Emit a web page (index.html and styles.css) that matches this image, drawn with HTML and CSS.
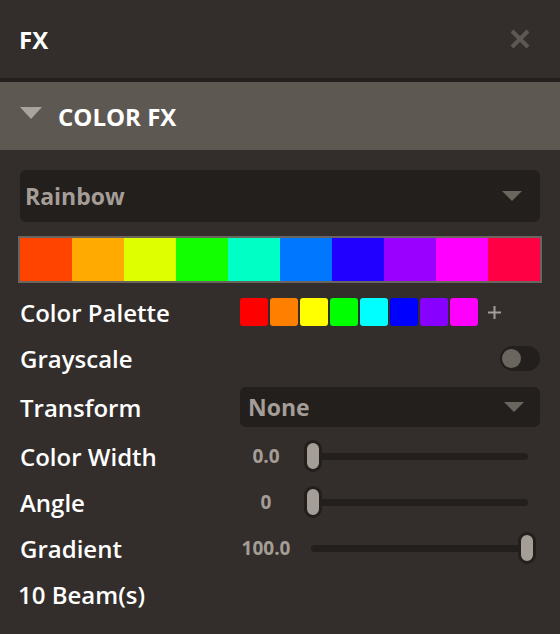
FILE: index.html
```html
<!DOCTYPE html>
<html>
<head>
<meta charset="utf-8">
<link rel="stylesheet" href="styles.css">
</head>
<body>
<div class="panel">
  <header class="topbar">
    <span class="title">FX</span>
    <svg class="close" width="20" height="20" viewBox="0 0 20 20"><path d="M2 2 L18 18 M18 2 L2 18" stroke="#5e5853" stroke-width="4" stroke-linecap="butt"/></svg>
  </header>
  <div class="section-head">
    <span class="caret"></span>
    <span class="section-title">COLOR FX</span>
  </div>
  <div class="preset">
    <div class="select select--preset">
      <span class="select-text">Rainbow</span>
      <span class="arrow"></span>
    </div>
    <div class="gradient-bar">
      <span class="g g1"></span><span class="g g2"></span><span class="g g3"></span><span class="g g4"></span><span class="g g5"></span>
      <span class="g g6"></span><span class="g g7"></span><span class="g g8"></span><span class="g g9"></span><span class="g g10"></span>
    </div>
  </div>
  <div class="rows">
    <div class="row">
      <span class="label">Color Palette</span>
      <div class="palette">
        <span class="sw s1"></span><span class="sw s2"></span><span class="sw s3"></span><span class="sw s4"></span>
        <span class="sw s5"></span><span class="sw s6"></span><span class="sw s7"></span><span class="sw s8"></span>
        <svg class="plus" width="13" height="13" viewBox="0 0 13 13"><path d="M6.5 0 V13 M0 6.5 H13" stroke="#a59d97" stroke-width="2"/></svg>
      </div>
    </div>
    <div class="row">
      <span class="label">Grayscale</span>
      <span class="toggle"><span class="knob"></span></span>
    </div>
    <div class="row row--tall">
      <span class="label">Transform</span>
      <div class="select select--inline">
        <span class="select-text">None</span>
        <span class="arrow"></span>
      </div>
    </div>
    <div class="row">
      <span class="label">Color Width</span>
      <span class="value">0.0</span>
      <div class="slider"><span class="track"></span><span class="thumb"></span></div>
    </div>
    <div class="row">
      <span class="label">Angle</span>
      <span class="value">0</span>
      <div class="slider"><span class="track"></span><span class="thumb"></span></div>
    </div>
    <div class="row">
      <span class="label">Gradient</span>
      <span class="value">100.0</span>
      <div class="slider"><span class="track track--end"></span><span class="thumb thumb--end"></span></div>
    </div>
    <div class="row">
      <span class="label label--beam">10 Beam(s)</span>
    </div>
  </div>
</div>
</body>
</html>
```

FILE: styles.css
```css
html, body {
  margin: 0;
  padding: 0;
  background: #332e2b;
}
body {
  font-family: "Open Sans", "Noto Sans", sans-serif;
  color: #ffffff;
  width: 560px;
  height: 634px;
  overflow: hidden;
}
.topbar {
  box-sizing: border-box;
  height: 82px;
  border-bottom: 4px solid #221f1c;
  display: flex;
  align-items: center;
  justify-content: space-between;
  padding: 0 30px 0 19px;
}
.title {
  font-size: 24px;
  font-weight: 700;
}
.close {
  display: block;
}
.section-head {
  height: 68px;
  background: #5e5853;
  display: flex;
  align-items: center;
  padding-left: 20px;
  gap: 16px;
}
.caret {
  width: 0;
  height: 0;
  border-left: 11.5px solid transparent;
  border-right: 11.5px solid transparent;
  border-top: 12px solid #aaa39e;
  margin-top: -6px;
}
.section-title {
  font-size: 24px;
  font-weight: 700;
}
.preset {
  margin: 20px 20px 0 20px;
}
.select {
  box-sizing: border-box;
  background: #221f1c;
  border-radius: 6px;
  display: flex;
  align-items: center;
  justify-content: space-between;
}
.select--preset {
  height: 52px;
  padding: 0 18px 0 5px;
}
.select--inline {
  flex: 1;
  height: 40px;
  padding: 0 16px 0 8px;
}
.select-text {
  font-size: 23px;
  font-weight: 700;
  color: #a59d97;
}
.arrow {
  width: 0;
  height: 0;
  border-left: 10px solid transparent;
  border-right: 10px solid transparent;
  border-top: 10px solid #6b6560;
}
.gradient-bar {
  margin: 14px -2px 0 -2px;
  border: 2px solid #6b6560;
  height: 43px;
  display: flex;
}
.g { flex: 1; }
.g1 { background: #ff4400; }
.g2 { background: #ffaa00; }
.g3 { background: #ddff00; }
.g4 { background: #11ff00; }
.g5 { background: #00ffc4; }
.g6 { background: #0077ff; }
.g7 { background: #2200ff; }
.g8 { background: #9900ff; }
.g9 { background: #ff00ff; }
.g10 { background: #ff0044; }
.rows {
  margin-top: 6px;
  padding: 0 20px;
}
.row {
  height: 46px;
  display: flex;
  align-items: center;
}
.row--tall {
  height: 52px;
}
.label {
  width: 220px;
  flex: none;
  font-size: 24px;
  font-weight: 600;
}
.label--beam {
  margin-left: -2px;
}
.palette {
  display: flex;
  align-items: center;
  gap: 2px;
}
.sw {
  width: 28px;
  height: 28px;
  border-radius: 3px;
}
.s1 { background: #ff0000; }
.s2 { background: #ff8000; }
.s3 { background: #ffff00; }
.s4 { background: #00ff00; }
.s5 { background: #00ffff; }
.s6 { background: #0000ff; }
.s7 { background: #8800ff; }
.s8 { background: #ff00ff; }
.plus {
  margin-left: 8px;
  display: block;
}
.toggle {
  margin-left: auto;
  box-sizing: border-box;
  width: 40px;
  height: 25px;
  border-radius: 13px;
  background: #221f1c;
  padding: 3px 2px;
  display: flex;
  align-items: center;
}
.knob {
  width: 19px;
  height: 19px;
  border-radius: 50%;
  background: #6b6560;
}
.value {
  width: 52px;
  flex: none;
  text-align: center;
  font-size: 19px;
  font-weight: 700;
  color: #a59d97;
  margin-right: 12px;
}
.slider {
  position: relative;
  width: 232px;
  height: 32px;
  display: flex;
  align-items: center;
}
.track {
  flex: 1;
  height: 7px;
  border-radius: 4px;
  background: #221f1c;
  margin: 0 8px 0 3px;
}
.track--end {
  margin: 0 8px 0 7px;
}
.thumb {
  position: absolute;
  top: 0;
  left: 0;
  box-sizing: border-box;
  width: 18px;
  height: 32px;
  border: 3px solid #221f1c;
  border-radius: 9px;
  background: #a59d97;
}
.thumb--end {
  left: auto;
  right: 0;
}
```
